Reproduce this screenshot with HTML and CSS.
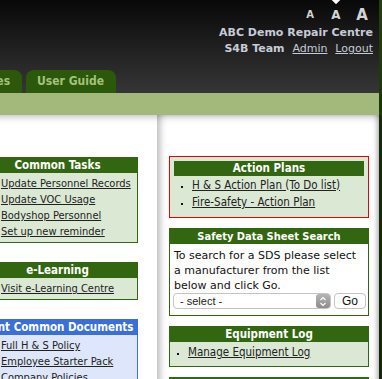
FILE: index.html
```html
<!DOCTYPE html>
<html lang="en">

<head>
    <meta charset="UTF-8">
    <title>ABC Demo Repair Centre - Health &amp; Safety</title>
    <link rel="stylesheet" href="styles.css">
</head>

<body>
    <div class="page">
        <div class="header">
            <div class="userBar">
                <div class="textSize">
                    <a href="#" class="sizeSmall">A</a>
                    <a href="#" class="sizeMedium current">A</a>
                    <a href="#" class="sizeLarge">A</a>
                </div>
                <div class="siteName">ABC Demo Repair Centre</div>
                <div class="userLinks">
                    <b>S4B Team</b>
                    <a href="#">Admin</a>
                    <a href="#">Logout</a>
                </div>
            </div>
            <ul class="tabs">
                <li><a href="#">Home</a></li>
                <li><a href="#">Resources</a></li>
                <li><a href="#">User Guide</a></li>
            </ul>
        </div>
        <div class="subBar"></div>

        <div class="content">
            <div class="colLeft">
                <div class="box">
                    <h3>Common Tasks</h3>
                    <ul>
                        <li><a href="#">Update Personnel Records</a></li>
                        <li><a href="#">Update VOC Usage</a></li>
                        <li><a href="#">Bodyshop Personnel</a></li>
                        <li><a href="#">Set up new reminder</a></li>
                    </ul>
                </div>
                <div class="box">
                    <h3>e-Learning</h3>
                    <ul>
                        <li><a href="#">Visit e-Learning Centre</a></li>
                    </ul>
                </div>
                <div class="box blue">
                    <h3>Print Common Documents</h3>
                    <ul>
                        <li><a href="#">Full H &amp; S Policy</a></li>
                        <li><a href="#">Employee Starter Pack</a></li>
                        <li><a href="#">Company Policies</a></li>
                    </ul>
                </div>
            </div>

            <div class="colRight">
                <div class="box highlight">
                    <h3>Action Plans</h3>
                    <ul>
                        <li><a href="#">H &amp; S Action Plan (To Do list)</a></li>
                        <li><a href="#">Fire-Safety - Action Plan</a></li>
                    </ul>
                </div>
                <div class="box plain">
                    <h3 class="small">Safety Data Sheet Search</h3>
                    <p>To search for a SDS please select a manufacturer from the list below and click Go.</p>
                    <form class="sdsForm">
                        <span class="selectWrap">
                            <select>
                                <option>- select -</option>
                            </select>
                            <span class="stepper">
                                <svg width="8" height="11" viewBox="0 0 8 11">
                                    <path d="M1.5 4 L4 1.5 L6.5 4 M1.5 7 L4 9.5 L6.5 7" fill="none" stroke="#fff" stroke-width="1.2" />
                                </svg>
                            </span>
                        </span>
                        <button type="button">Go</button>
                    </form>
                </div>
                <div class="box compact">
                    <h3>Equipment Log</h3>
                    <ul>
                        <li><a href="#">Manage Equipment Log</a></li>
                    </ul>
                </div>
                <div class="box">
                    <h3>Accident Book</h3>
                    <ul>
                        <li><a href="#">View Accident Book</a></li>
                    </ul>
                </div>
            </div>
        </div>
    </div>
</body>
</html>
```

FILE: styles.css
```css
* {
  margin: 0;
  padding: 0;
  box-sizing: border-box;
}

body {
  background: linear-gradient(#21400d 0, #1d360b 115px, #172a0a 116px, #15240a 100%);
  font-family: "DejaVu Sans", Verdana, sans-serif;
  font-size: 11px;
  color: #111;
  overflow: hidden;
  height: 379px;
}

.page {
  width: 421px;
  margin-left: -42px;
  background: #fff;
  min-height: 379px;
}

/* header */
.header {
  height: 93px;
  display: flex;
  flex-direction: column;
  background: linear-gradient(#080808 0, #1c1c1c 40px, #363636 93px);
}

.userBar {
  text-align: right;
  padding-right: 6px;
  color: #c6cbd6;
  font-weight: bold;
}

.textSize {
  height: 25px;
  display: flex;
  justify-content: flex-end;
  align-items: center;
  padding-top: 4px;
  margin-right: -2px;
}

.textSize a {
  color: #d4d4d4;
  text-decoration: none;
  width: 26px;
  text-align: center;
  position: relative;
}

.sizeSmall { font-size: 10px; }
.sizeMedium { font-size: 12px; }
.sizeLarge { font-size: 15px; }

.textSize .current::before {
  content: "";
  position: absolute;
  left: 10px;
  top: -11px;
  width: 6px;
  height: 6px;
  background: #fff;
  transform: rotate(45deg);
}

.siteName {
  line-height: 15px;
}

.userLinks {
  line-height: 17px;
}

.userLinks a {
  color: #c6cbd6;
  font-weight: normal;
  margin-left: 4px;
}

.tabs {
  margin-top: auto;
  list-style: none;
  display: flex;
  justify-content: flex-end;
  gap: 4px;
  padding-right: 263px;
}

.tabs li {
  flex-shrink: 0;
}

.tabs a {
  display: block;
  height: 23px;
  line-height: 22px;
  padding: 0 12px 0 11px;
  background: #2c580b;
  color: #a2c27a;
  font-weight: bold;
  font-size: 12px;
  font-stretch: condensed;
  text-decoration: none;
  border-radius: 8px 8px 0 0;
  white-space: nowrap;
}

.subBar {
  height: 22px;
  background: #a2b97b;
}

/* columns */
.content {
  display: grid;
  grid-template-columns: 199px 222px;
  min-height: 264px;
  box-shadow: inset 0 7px 7px -5px rgba(0, 0, 0, 0.25);
  font-stretch: condensed;
}

.colLeft {
  padding: 42px 19px 0 19px;
  display: flex;
  flex-direction: column;
  gap: 19px;
}

.colRight {
  padding: 41px 10px 0 12px;
  display: flex;
  flex-direction: column;
  gap: 10px;
  box-shadow: inset 8px 0 7px -5px rgba(0, 0, 0, 0.28), inset -5px 0 5px -3px rgba(0, 0, 0, 0.3);
}

/* boxes */
.box {
  border: 1px solid #336611;
  background: #dbe9d4;
}

.box h3 {
  background: #336611;
  color: #fff;
  font-size: 11.5px;
  line-height: 15px;
  text-align: center;
  white-space: nowrap;
}

.box h3.small {
  font-size: 11px;
}

.box ul {
  list-style: square;
  padding: 3px 0 2px 23px;
}

.box li {
  line-height: 16px;
}

.box li::marker {
  font-size: 8px;
}

.box a {
  color: #222;
}

.colRight .box a {
  font-size: 11.5px;
}

.box.highlight {
  border-color: #ee0000;
  padding: 4px;
}

.box.highlight ul {
  padding: 1px 0 2px 18px;
}

.box.highlight li {
  line-height: 17px;
}

.box.compact ul {
  padding: 2px 0 5px 18px;
}

.box.plain {
  background: #fff;
}

.box p {
  font-size: 11px;
  font-stretch: normal;
  line-height: 15px;
  padding: 4px 4px 0 4px;
  color: #111;
}

.box.blue {
  border-color: #3a6fd8;
  background: #dde6fa;
}

.box.blue h3 {
  background: #3a6fd8;
}

/* sds search form */
.sdsForm {
  display: flex;
  gap: 3px;
  padding: 0 2px 6px 3px;
}

.selectWrap {
  flex: 1;
  position: relative;
}

.selectWrap select {
  appearance: none;
  width: 100%;
  height: 16px;
  border: 1px solid #c4c4c4;
  border-radius: 4px;
  background: #fff;
  font-family: "Liberation Sans", Arial, sans-serif;
  font-size: 11px;
  padding-left: 6px;
  color: #222;
}

.stepper {
  position: absolute;
  right: 1px;
  top: 1px;
  width: 14px;
  height: 14px;
  border-radius: 3px;
  background: linear-gradient(#b5b5b5, #8c8c8c);
  display: flex;
  align-items: center;
  justify-content: center;
}

.sdsForm button {
  width: 32px;
  height: 16px;
  border: 1px solid #c4c4c4;
  border-radius: 4px;
  background: #fff;
  font-family: "Liberation Sans", Arial, sans-serif;
  font-size: 12px;
  color: #111;
}
```
